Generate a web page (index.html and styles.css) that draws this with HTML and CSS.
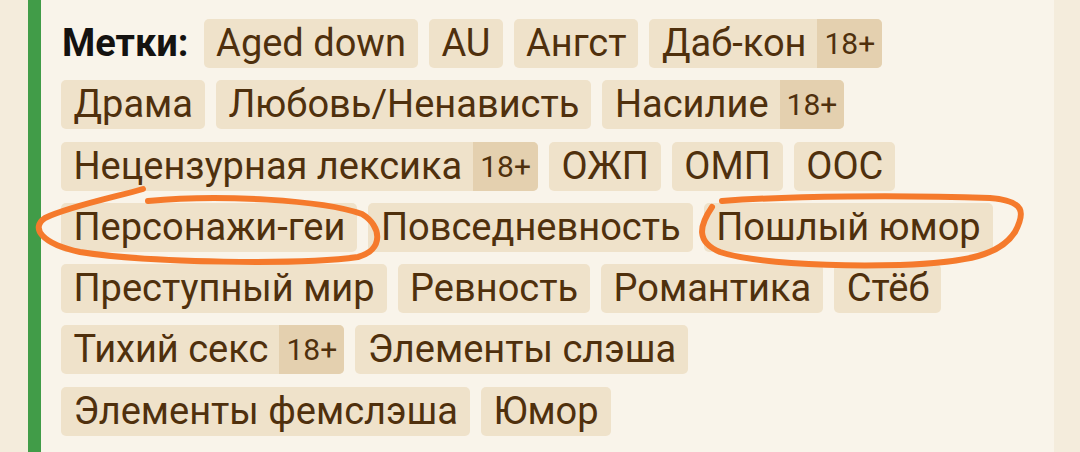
FILE: index.html
```html
<!DOCTYPE html>
<html lang="ru">
<head>
<meta charset="utf-8">
<title>Метки</title>
<link rel="stylesheet" href="styles.css">
</head>
<body>
<div class="page">
  <section class="panel">
    <div class="tags">
      <span class="label">Метки:</span>
      <span class="tag"><span class="tag-name">Aged down</span></span>
      <span class="tag"><span class="tag-name">AU</span></span>
      <span class="tag"><span class="tag-name">Ангст</span></span>
      <span class="tag"><span class="tag-name">Даб-кон</span><span class="tag-age">18+</span></span>
      <span class="tag"><span class="tag-name">Драма</span></span>
      <span class="tag"><span class="tag-name">Любовь/Ненависть</span></span>
      <span class="tag"><span class="tag-name">Насилие</span><span class="tag-age">18+</span></span>
      <span class="tag"><span class="tag-name">Нецензурная лексика</span><span class="tag-age">18+</span></span>
      <span class="tag"><span class="tag-name">ОЖП</span></span>
      <span class="tag"><span class="tag-name">ОМП</span></span>
      <span class="tag"><span class="tag-name">ООС</span></span>
      <span class="tag"><span class="tag-name">Персонажи-геи</span></span>
      <span class="tag"><span class="tag-name">Повседневность</span></span>
      <span class="tag"><span class="tag-name">Пошлый юмор</span></span>
      <span class="tag"><span class="tag-name">Преступный мир</span></span>
      <span class="tag"><span class="tag-name">Ревность</span></span>
      <span class="tag"><span class="tag-name">Романтика</span></span>
      <span class="tag"><span class="tag-name">Стёб</span></span>
      <span class="tag"><span class="tag-name">Тихий секс</span><span class="tag-age">18+</span></span>
      <span class="tag"><span class="tag-name">Элементы слэша</span></span>
      <span class="tag"><span class="tag-name">Элементы фемслэша</span></span>
      <span class="tag"><span class="tag-name">Юмор</span></span>
    </div>
  </section>
  <!-- hand-drawn marker strokes circling two of the tags -->
  <svg class="marks" width="1080" height="452" viewBox="0 0 1080 452" aria-hidden="true">
    <path d="M143,189 C120,196 70,206 45,218 C30,228 42,244 80,252 C150,263 300,265 358,257 C384,250 382,226 362,214 C322,200 220,194 148,201"/>
    <path d="M722,201 C790,196 900,195 990,198 C1026,201 1025,213 1015,232 C1000,255 970,262 900,265 C820,267 750,262 720,252 C696,242 699,226 712,207"/>
  </svg>
</div>
</body>
</html>
```

FILE: styles.css
```css
html, body {
  margin: 0;
  padding: 0;
}

body {
  background: #f4ecdc;
  font-family: Roboto, "Noto Sans", "Liberation Sans", sans-serif;
  overflow: hidden;
}

.page {
  position: relative;
  width: 1080px;
  height: 452px;
}

.panel {
  margin-left: 28px;
  width: 1026px;
  height: 452px;
  box-sizing: border-box;
  background: #f9f4ea;
  border-left: 13px solid #419c48;
  padding: 19px 30px 0 20px;
}

.tags {
  display: flex;
  flex-wrap: wrap;
  align-items: flex-start;
  row-gap: 12.3px;
  column-gap: 11px;
}

.label {
  font-weight: 700;
  font-size: 38px;
  line-height: 49px;
  color: #141210;
  padding-left: 1px;
  margin-right: 4px;
}

.tag {
  display: inline-flex;
  align-items: stretch;
  border-radius: 5px;
  overflow: hidden;
  background: #efe2ca;
  color: #4f300d;
}

.tag-name {
  font-size: 38px;
  line-height: 49px;
  padding: 0 12px 0 12.5px;
}

.tag-age {
  font-size: 30px;
  line-height: 49px;
  padding: 0 7px;
  background: #e4d0af;
  margin-left: -1px;
}

.marks {
  position: absolute;
  left: 0;
  top: 0;
  pointer-events: none;
}

.marks path {
  fill: none;
  stroke: #f57a2c;
  stroke-width: 6;
  stroke-linecap: round;
  stroke-linejoin: round;
}
```
